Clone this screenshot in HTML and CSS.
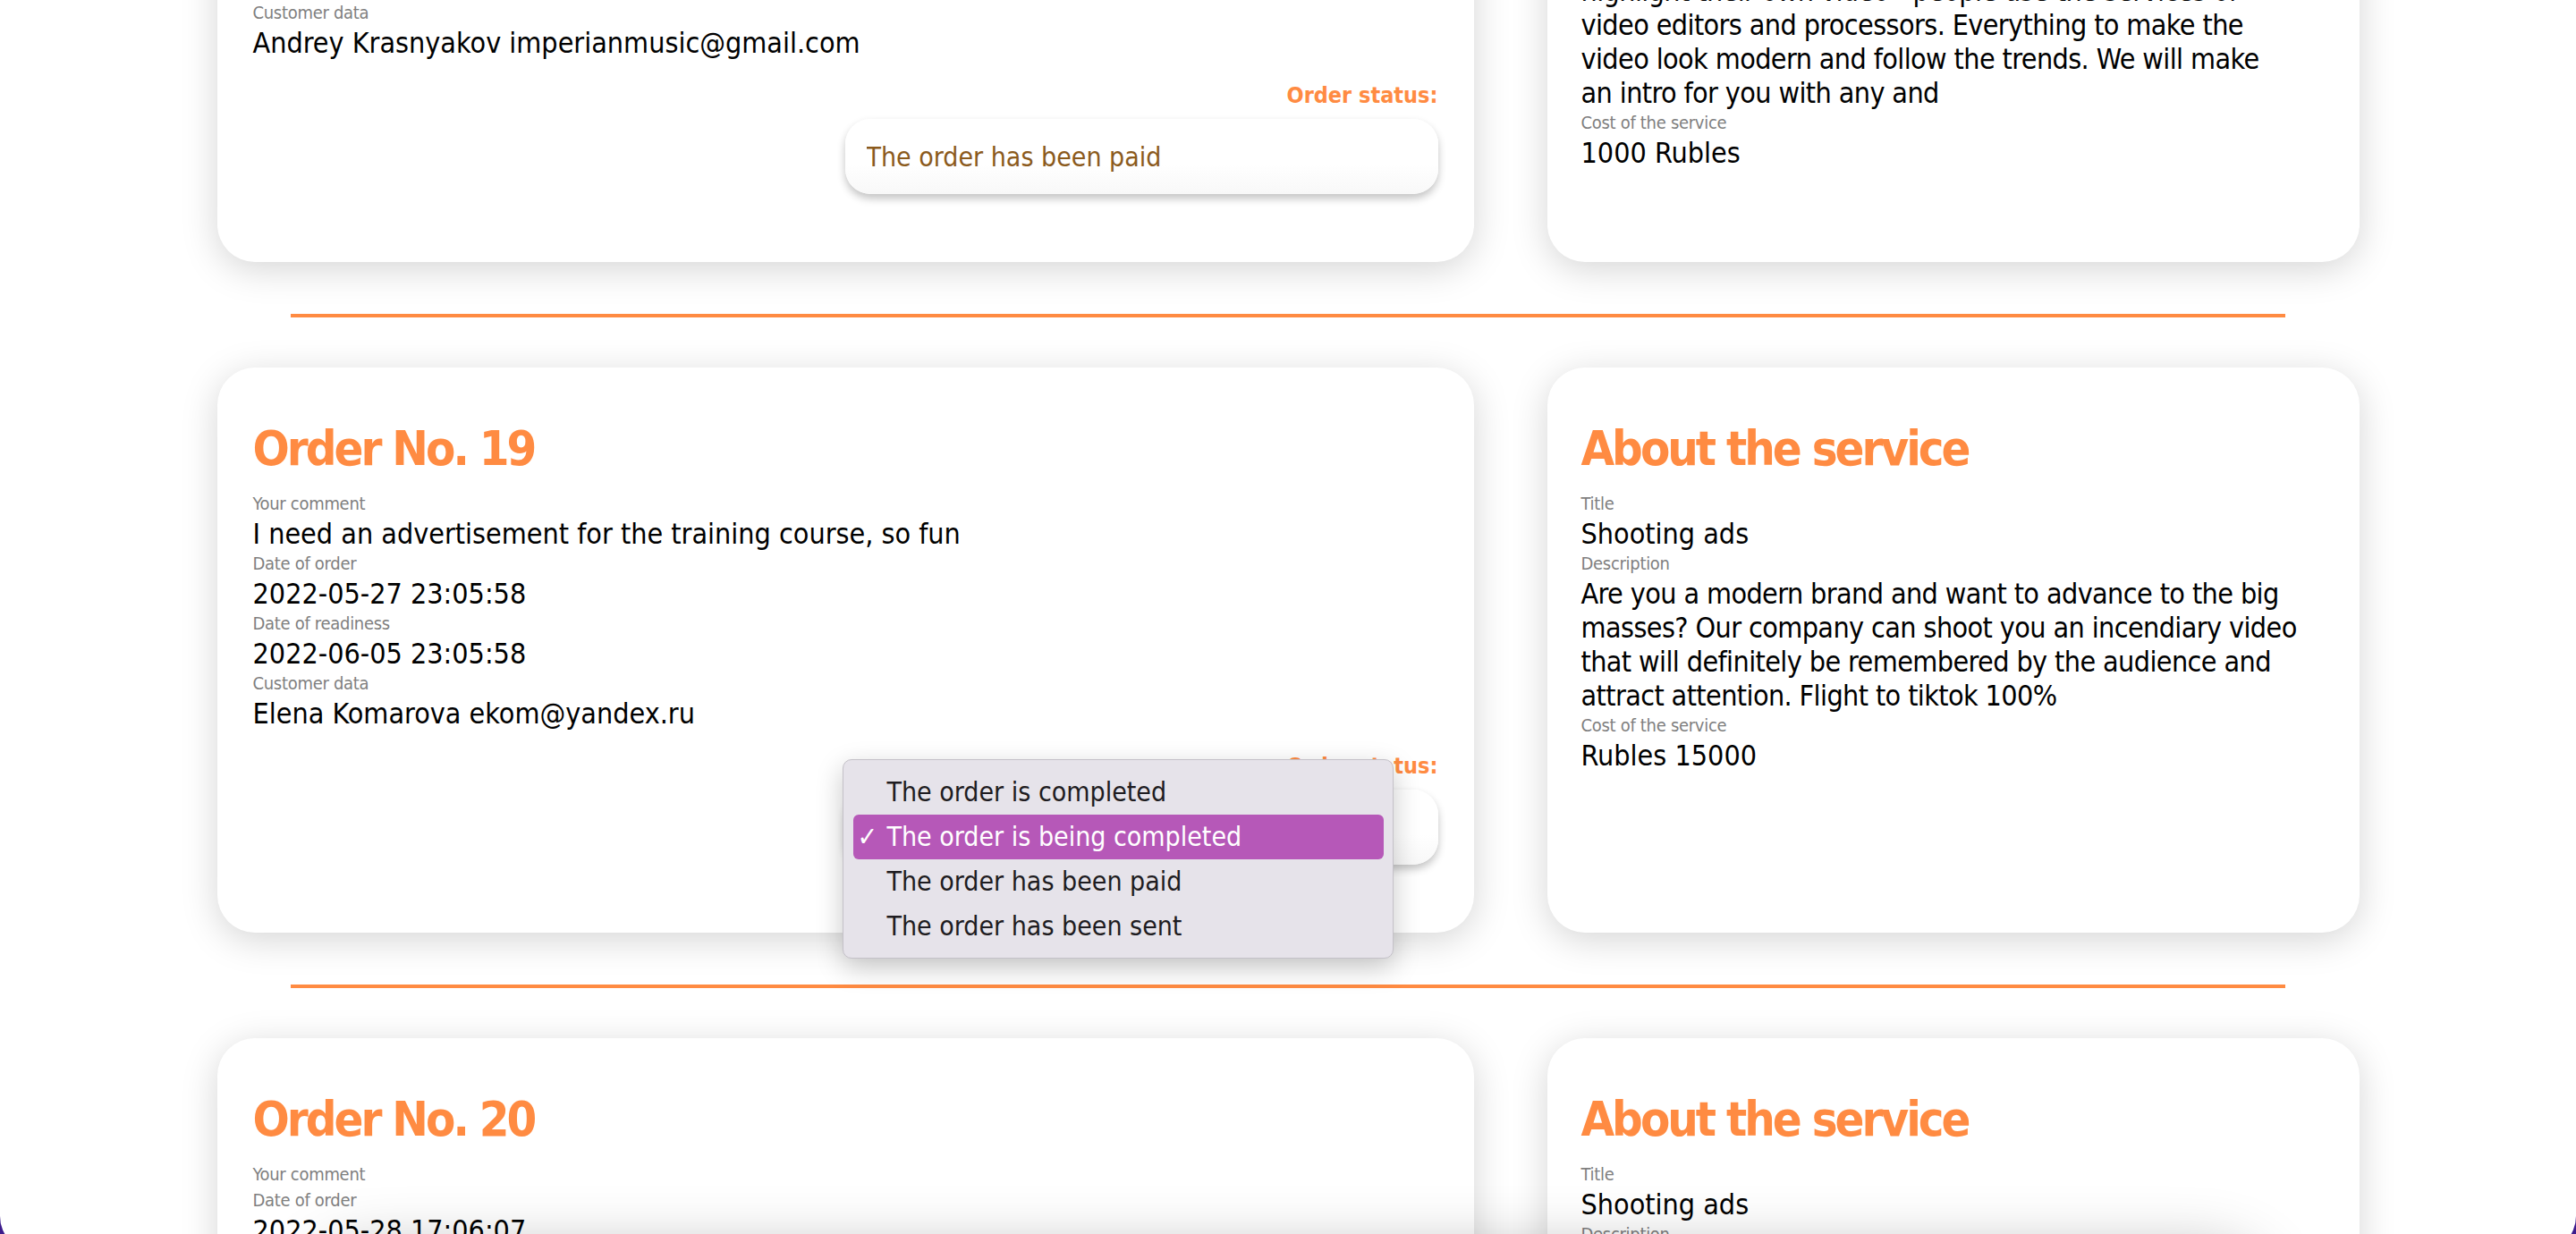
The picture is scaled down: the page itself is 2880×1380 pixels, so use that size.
FILE: index.html
```html
<!DOCTYPE html>
<html lang="en">
<head>
<meta charset="utf-8">
<title>My orders</title>
<link rel="stylesheet" href="styles.css">
</head>
<body>
<div class="app">
  <main class="orders">

    <article class="order">
      <section class="card card--order">
        <h2 class="card__title">Order No. 18</h2>
        <dl class="fields">
          <dt class="fields__label">Your comment</dt>
          <dd class="fields__value">I need a bright intro for my channel</dd>
          <dt class="fields__label">Date of order</dt>
          <dd class="fields__value">2022-05-26 19:12:40</dd>
          <dt class="fields__label">Date of readiness</dt>
          <dd class="fields__value">2022-06-02 19:12:40</dd>
          <dt class="fields__label">Customer data</dt>
          <dd class="fields__value">Andrey Krasnyakov imperianmusic@gmail.com</dd>
        </dl>
        <div class="status">
          <span class="status__label">Order status:</span>
          <div class="status__control">
            <select class="status__select">
              <option>The order is completed</option>
              <option>The order is being completed</option>
              <option selected>The order has been paid</option>
              <option>The order has been sent</option>
            </select>
          </div>
        </div>
      </section>
      <section class="card card--service">
        <h2 class="card__title">About the service</h2>
        <dl class="fields">
          <dt class="fields__label">Title</dt>
          <dd class="fields__value">Making an intro</dd>
          <dt class="fields__label">Description</dt>
          <dd class="fields__value fields__value--text">Do you want a stylish intro for your channel?<br>Today many bloggers and companies want to<br>highlight their own video - people use the services of<br>video editors and processors. Everything to make the<br>video look modern and follow the trends. We will make<br>an intro for you with any and</dd>
          <dt class="fields__label">Cost of the service</dt>
          <dd class="fields__value">1000 Rubles</dd>
        </dl>
      </section>
    </article>

    <hr class="divider">

    <article class="order">
      <section class="card card--order">
        <h2 class="card__title">Order No. 19</h2>
        <dl class="fields">
          <dt class="fields__label">Your comment</dt>
          <dd class="fields__value">I need an advertisement for the training course, so fun</dd>
          <dt class="fields__label">Date of order</dt>
          <dd class="fields__value">2022-05-27 23:05:58</dd>
          <dt class="fields__label">Date of readiness</dt>
          <dd class="fields__value">2022-06-05 23:05:58</dd>
          <dt class="fields__label">Customer data</dt>
          <dd class="fields__value">Elena Komarova ekom@yandex.ru</dd>
        </dl>
        <div class="status">
          <span class="status__label">Order status:</span>
          <div class="status__control">
            <select class="status__select">
              <option>The order is completed</option>
              <option selected>The order is being completed</option>
              <option>The order has been paid</option>
              <option>The order has been sent</option>
            </select>
            <div class="select-menu" role="listbox">
              <div class="select-menu__item">The order is completed</div>
              <div class="select-menu__item select-menu__item--active"><span class="select-menu__check">✓</span>The order is being completed</div>
              <div class="select-menu__item">The order has been paid</div>
              <div class="select-menu__item">The order has been sent</div>
            </div>
          </div>
        </div>
      </section>
      <section class="card card--service">
        <h2 class="card__title">About the service</h2>
        <dl class="fields">
          <dt class="fields__label">Title</dt>
          <dd class="fields__value">Shooting ads</dd>
          <dt class="fields__label">Description</dt>
          <dd class="fields__value fields__value--text">Are you a modern brand and want to advance to the big<br>masses? Our company can shoot you an incendiary video<br>that will definitely be remembered by the audience and<br>attract attention. Flight to tiktok 100%</dd>
          <dt class="fields__label">Cost of the service</dt>
          <dd class="fields__value">Rubles 15000</dd>
        </dl>
      </section>
    </article>

    <hr class="divider">

    <article class="order">
      <section class="card card--order">
        <h2 class="card__title">Order No. 20</h2>
        <dl class="fields">
          <dt class="fields__label">Your comment</dt>
          <dd class="fields__value"></dd>
          <dt class="fields__label">Date of order</dt>
          <dd class="fields__value">2022-05-28 17:06:07</dd>
          <dt class="fields__label">Date of readiness</dt>
          <dd class="fields__value">2022-06-06 17:06:07</dd>
          <dt class="fields__label">Customer data</dt>
          <dd class="fields__value">Elena Komarova ekom@yandex.ru</dd>
        </dl>
      </section>
      <section class="card card--service">
        <h2 class="card__title">About the service</h2>
        <dl class="fields">
          <dt class="fields__label">Title</dt>
          <dd class="fields__value">Shooting ads</dd>
          <dt class="fields__label">Description</dt>
          <dd class="fields__value fields__value--text">Are you a modern brand and want to advance to the big<br>masses? Our company can shoot you an incendiary video</dd>
        </dl>
      </section>
    </article>

  </main>
</div>
<div class="dock-shadow" aria-hidden="true"></div>
</body>
</html>
```

FILE: styles.css
```css
html, body {
  margin: 0;
  height: 100%;
}

body {
  background: #3d1c8c;
  overflow: hidden;
  font-family: "DejaVu Sans", Verdana, sans-serif;
  font-stretch: semi-condensed;
  color: #000;
}

.app {
  height: calc(100vh + 20px);
  background: #fff;
  border-radius: 0 0 40px 40px;
  overflow: hidden;
}

.orders {
  margin-top: -339px;
}

.order {
  display: grid;
  grid-template-columns: 1405px 908px;
  column-gap: 82px;
  justify-content: center;
}

.card {
  background: #fff;
  border-radius: 42px;
  box-shadow: 0 8px 40px rgba(0, 0, 0, 0.17);
  padding: 58px 40px 76px;
}

.card--service {
  padding-left: 38px;
  padding-right: 16px;
}

.card__title {
  margin: 0 0 14px;
  font-size: 54px;
  line-height: 66px;
  font-weight: 700;
  letter-spacing: -3px;
  color: #ff8b42;
}

.fields {
  margin: 0;
}

.fields__label {
  font-size: 20px;
  line-height: 28px;
  letter-spacing: -0.3px;
  color: #7f7f7f;
}

.fields__value {
  margin: 1px 0 0;
  font-size: 32px;
  line-height: 38px;
  color: #000;
}

.fields__value--text {
  letter-spacing: -0.6px;
}

.status {
  margin-top: 25px;
  display: flex;
  flex-direction: column;
  align-items: flex-end;
  gap: 11px;
}

.status__label {
  font-size: 25px;
  line-height: 30px;
  font-weight: 700;
  color: #ff8b42;
}

.status__control {
  position: relative;
}

.status__select {
  appearance: none;
  -webkit-appearance: none;
  display: block;
  width: 663px;
  height: 84px;
  padding: 0 24px;
  border: none;
  border-radius: 28px;
  background: linear-gradient(#ffffff 60%, #f8f8f8);
  box-shadow: 0 5px 10px rgba(0, 0, 0, 0.24);
  font-family: inherit;
  font-stretch: inherit;
  font-size: 30px;
  color: #8b5a1c;
  outline: none;
}

.select-menu {
  position: absolute;
  left: -3px;
  top: -34px;
  width: 616px;
  box-sizing: border-box;
  padding: 11px 10px 10px 11px;
  background: #e6e3ea;
  border: 1px solid #c4c1c8;
  border-radius: 10px;
  box-shadow: 0 10px 30px rgba(0, 0, 0, 0.22);
  z-index: 2;
}

.select-menu__item {
  position: relative;
  height: 50px;
  padding-left: 38px;
  border-radius: 6px;
  font-size: 30px;
  line-height: 50px;
  color: #1e1c21;
  white-space: nowrap;
}

.select-menu__item--active {
  background: #b658b8;
  color: #fff;
}

.select-menu__check {
  position: absolute;
  left: 5px;
  top: 0;
  font-weight: 700;
}

.divider {
  width: 2230px;
  height: 4px;
  margin: 58px auto 56px;
  border: none;
  background: #ff8b42;
}

.dock-shadow {
  position: fixed;
  left: 50%;
  bottom: -140px;
  width: 2180px;
  height: 120px;
  transform: translateX(-50%);
  border-radius: 60px;
  background: #fff;
  box-shadow: 0 0 70px rgba(0, 0, 0, 0.3);
}
```
